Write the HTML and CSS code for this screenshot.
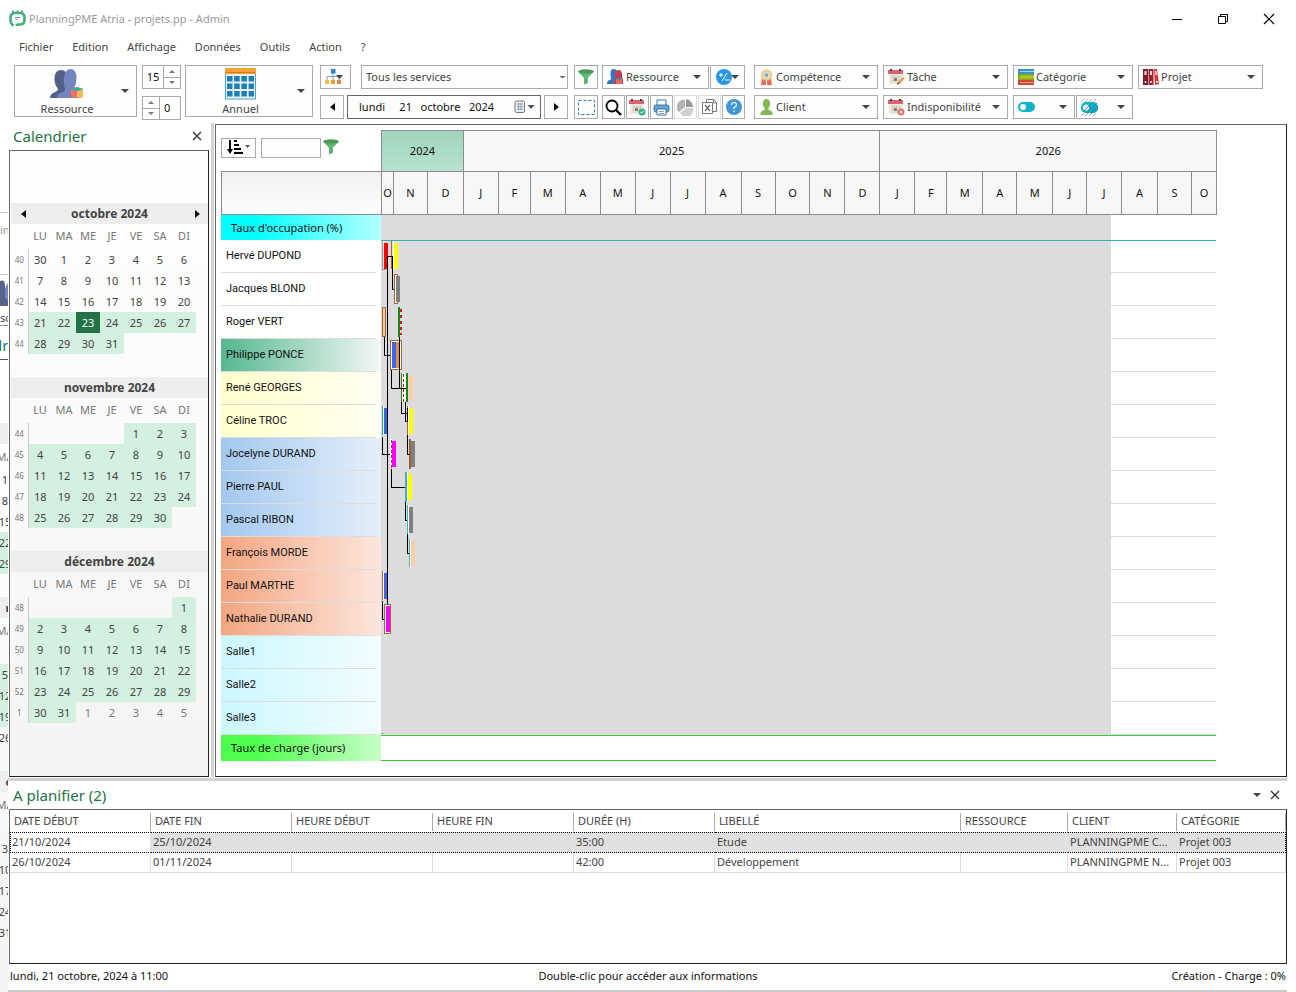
FILE: index.html
```html
<!DOCTYPE html>
<html lang="fr">
<head>
<meta charset="utf-8">
<title>PlanningPME Atria - projets.pp - Admin</title>
<link rel="stylesheet" href="styles.css">
</head>
<body>
<svg class="defs" aria-hidden="true">
  <symbol id="i-funnel" viewBox="0 0 16 16"><path d="M0 2.500 6 9v6.500l3.500-1.500V9L16 2.500z" fill="#5fb870"/><ellipse cx="8" cy="2.500" rx="8" ry="2.200" fill="#4b9a5c"/><path d="M8 9h1.500v5L8 14.600z" fill="#4ea660"/></symbol>
  <symbol id="i-cal" viewBox="0 0 17 17"><path d="M1 4h14v11H1z" fill="#efe8dc"/><path d="M0 1h15v4H0z" fill="#d9626c"/><path d="M3 0v2M12 0v2" stroke="#4b3b50" stroke-width="2"/><path d="M3 8h10M3 11h10M5 6v8M8 6v8M11 6v8" stroke="#cfc8bb"/><path d="M6 9h3v3H6z" fill="#8d7d6c"/></symbol>
</svg>
<div class="window">
  <div class="backdrop" aria-hidden="true">
    <div class="sliver rule">in</div>
    <div class="sliver face rule"><svg width="8" height="28" viewBox="0 0 8 28"><path d="M0 2Q5 0 5 7V18L8 21V27H0z" fill="#56648c"/><path d="M5 9L8 4V22L5 18z" fill="#7486c4"/></svg></div>
    <div class="sliver small">sc</div>
    <div class="sliver big rule">dr</div>
    <div class="bcell bhead first"></div><div class="bcell bday">MA</div>
    <div class="bcell">1</div><div class="bcell">8</div><div class="bcell">15</div><div class="bcell on">22</div><div class="bcell on">29</div>
    <div class="bcell bhead">n</div><div class="bcell bday">MA</div>
    <div class="bcell"></div><div class="bcell on">5</div><div class="bcell on">12</div><div class="bcell on">19</div><div class="bcell">26</div>
    <div class="bcell bhead last">o</div><div class="bcell bday">MA</div>
    <div class="bcell"></div><div class="bcell">3</div><div class="bcell">10</div><div class="bcell">17</div><div class="bcell">24</div><div class="bcell">31</div>
  </div>
  <div class="app">
    <header class="titlebar">
      <svg width="17" height="18" viewBox="0 0 17 18"><path d="M4.500 15.500Q1.500 14 1.500 10V7.500Q1.500 3 6 3h5q4.500 0 4.500 4.500V10q0 4.500-5 4.500-2.500 0-3.500 1" fill="none" stroke="#42b07c" stroke-width="2.600"/><path d="M4 .5v3M8.500 .5v3M13 .5v3" stroke="#42b07c" stroke-width="2"/><path d="M6 7.500h5" stroke="#3f9bd0"/><path d="M6 9.500h3" stroke="#e79b35"/></svg>
      <span class="title">PlanningPME Atria - projets.pp - Admin</span>
      <button class="wbtn" aria-label="Réduire"><svg width="12" height="12"><path d="M1 6.500h10" stroke="#000"/></svg></button>
      <button class="wbtn" aria-label="Restaurer"><svg width="12" height="12"><path d="M1.500 3.500h7v7h-7zM3.500 3V1.500h7v7H9" fill="none" stroke="#000"/></svg></button>
      <button class="wbtn" aria-label="Fermer"><svg width="12" height="12"><path d="M1 1l10 10M11 1L1 11" stroke="#000" stroke-width="1.200"/></svg></button>
    </header>
    <nav class="menu"><button>Fichier</button><button>Edition</button><button>Affichage</button><button>Données</button><button>Outils</button><button>Action</button><button>?</button></nav>

    <div class="toolbar">
      <button class="tb big-btn">
        <span class="big-face"><svg width="34" height="30" viewBox="0 0 34 30"><path d="M0 29q0-4 5-6 3-1 3-3Q4 15 4.500 8 5.500 1 11 1q4 0 5 3l3 22v3z" fill="#525f86"/><path d="M7 29q0-5 6-6 2-1 2-3-2-5-1-11Q15 0 20.500 0 26 0 26.500 8q.3 6-2.500 12 0 2 3 3 4 1 4 6z" fill="#7484c1"/><path d="M21 20l6-2 6 2v8l-6 1-6-1z" fill="#f3716a"/><path d="M27 22l6-2v8l-6 1z" fill="#f8b95d"/><path d="M21 20l6-2 6 2-6 2z" fill="#22b5a7"/></svg>Ressource</span><i class="caret"></i>
      </button>
      <div class="spins">
        <div class="spin"><input type="text" value="15" aria-label="Hauteur des lignes"><span><button aria-label="Plus"><i class="up"></i></button><button aria-label="Moins"><i class="down"></i></button></span></div>
        <div class="spin rev"><input type="text" value="0" aria-label="Espacement"><span><button aria-label="Plus"><i class="up"></i></button><button aria-label="Moins"><i class="down"></i></button></span></div>
      </div>
      <button class="tb big-btn annual">
        <span class="big-face"><svg width="31" height="32" viewBox="0 0 31 32"><path d="M.5 1.500h30V31H.5z" fill="#e7f4fb" stroke="#4ba3d5"/><path d="M0 0h31v6H0z" fill="#f4a13a"/><path d="M1 4.500h29" stroke="#d97c18"/><g stroke="#1f7fb5" stroke-width="5.500" stroke-dasharray="5.500 1.700"><path d="M2 10.800h27M2 18.300h27M2 25.800h27"/></g></svg>Annuel</span><i class="caret"></i>
      </button>
      <div class="stack nav-stack">
        <div class="line">
          <button class="tb w31" aria-label="Organisation"><svg width="22" height="16" viewBox="0 0 22 16"><path d="M8 3v8M2 11V7.500h12V11" fill="none" stroke="#8b99a6"/><path d="M6 0h4.500v4.500H6z" fill="#1d8be0"/><path d="M0 11h4v4H0z" fill="#f2be42"/><path d="M6 11h4v4H6z" fill="#ee9a2e"/><path d="M12 11h4v4h-4z" fill="#e8833a"/><path d="M11 6h7l-3.500 4z" fill="#444"/></svg></button>
          <select class="tb services" aria-label="Services"><option>Tous les services</option></select>
        </div>
        <div class="line tight">
          <button class="tb w24" aria-label="Précédent"><i class="tri-l"></i></button>
          <label class="tb date"><input type="text" aria-label="Date" value="lundi    &nbsp;21   octobre   2024"><svg width="21" height="14" viewBox="0 0 21 14"><rect x="1" y="1" width="9.500" height="11.500" rx="1.500" fill="#e9edf3" stroke="#777"/><path d="M3 4h6M3 6.500h6M3 9h6M4.500 3v7.500M7 3v7.500" stroke="#8d96a5" stroke-width=".8"/><path d="M13.500 5h7L17 9z" fill="#44587a"/></svg></label>
          <button class="tb w24" aria-label="Suivant"><i class="tri-r"></i></button>
        </div>
      </div>
      <div class="stack sel-stack">
        <button class="tb w24" aria-label="Filtrer"><svg width="16" height="16"><use href="#i-funnel"/></svg></button>
        <button class="tb w24" aria-label="Sélection"><svg width="17" height="15"><rect x=".5" y=".5" width="16" height="14" fill="none" stroke="#2a7bc0" stroke-dasharray="3 2"/></svg></button>
      </div>
      <div class="stack mid">
        <div class="line tight">
          <button class="tb drop grow"><svg width="17" height="16" viewBox="0 0 17 16"><path d="M0 15q0-4 3-4 1 0 1-2Q2 0 6.500 0q4 0 3.500 4l1 11z" fill="#3079bd"/><path d="M6 15q0-3 2-4V5q0-4 3.500-4T15 6q0 4 1 5v4z" fill="#bd4153"/><path d="M9 10h6v5H9z" fill="#e4695b"/><path d="M9 10l3-1 3 1-3 1z" fill="#22a59c"/></svg><span>Ressource</span><i class="caret"></i></button>
          <button class="tb w35" aria-label="Plus ou moins"><svg width="24" height="16" viewBox="0 0 24 16"><circle cx="8" cy="8" r="8" fill="#2796e5"/><path d="M5 4v4M3 6h4M11 4L6 12M9 11h5" stroke="#fff"/><path d="M15 6h8l-4 4z" fill="#444"/></svg></button>
        </div>
        <div class="line icons">
          <button class="tb" aria-label="Rechercher"><svg width="17" height="17" viewBox="0 0 17 17" fill="none" stroke="#000"><circle cx="7" cy="7" r="5.500" stroke-width="1.800"/><path d="M11 11l5 5" stroke-width="2.400"/></svg></button>
          <button class="tb" aria-label="Planifier"><svg width="17" height="17"><use href="#i-cal"/><circle cx="13" cy="13" r="3.500" fill="#3ab191"/><path d="M11.500 13l1 1 2-2" fill="none" stroke="#fff"/></svg></button>
          <button class="tb" aria-label="Imprimer"><svg width="17" height="17" viewBox="0 0 17 17" stroke="#3b79a8"><path d="M4 6V1h9v5" fill="#fff"/><rect x="1" y="6" width="15" height="7" rx="2" fill="#62a5d6"/><path d="M4 10h9v6H4z" fill="#fff"/><path d="M6 12.500h5M6 14.500h5" stroke="#8aa"/></svg></button>
          <button class="tb off" aria-label="Statistiques" disabled><svg width="17" height="17" viewBox="0 0 17 17"><path d="M8 1v7L2 13A7 7 0 0 1 8 1z" fill="#b3b3b3"/><path d="M9 0a8 8 0 0 1 7 8H9z" fill="#999"/><path d="M16 9a7 7 0 0 1-13 5l6-5z" fill="#d0d0d0"/></svg></button>
          <button class="tb off" aria-label="Excel" disabled><svg width="17" height="17" viewBox="0 0 17 17" fill="none" stroke="#777"><path d="M5.500 3.500v-3h7l3 3v9h-4"/><path d="M1.500 3.500h10v11h-10z" fill="#fff"/><path d="M4 6l5 6M9 6l-5 6" stroke="#666" stroke-width="1.300"/><path d="M12.500 1v3h3"/></svg></button>
          <button class="tb" aria-label="Aide"><svg width="16" height="16" viewBox="0 0 16 16"><circle cx="8" cy="8" r="8" fill="#3f97d3"/><path d="M5.500 6Q5.500 3.500 8 3.500T10.500 6Q10.500 7.500 8 8.500V10M8 11.500V13" fill="none" stroke="#fff" stroke-width="1.200"/></svg></button>
        </div>
      </div>
      <div class="stack filters">
        <div class="line fl">
          <button class="tb drop f1"><svg width="15" height="17" viewBox="0 0 15 17"><path d="M3 9h4v7H2zM8 9h4l1 7H8z" fill="#ea6b52"/><circle cx="7.500" cy="6" r="5.800" fill="#f5cf83"/><circle cx="7.500" cy="6" r="3.600" fill="#c9dce0"/><circle cx="7.500" cy="6" r="1.500" fill="#7896aa"/></svg><span>Compétence</span><i class="caret"></i></button>
          <button class="tb drop f2"><svg width="17" height="17" viewBox="0 0 17 17"><use href="#i-cal"/><path d="M9 16l1-3 5-5 1.500 1.500-5 5z" fill="#e39a3d"/><path d="M9 16l1-3 1.500 1.500z" fill="#70533c"/></svg><span>Tâche</span><i class="caret"></i></button>
          <button class="tb drop f3"><svg width="16" height="16" viewBox="0 0 16 16"><path d="M0 0h16v5H0z" fill="#3692c7"/><path d="M2 2.500h14" stroke="#a0d4ef"/><path d="M0 5h16v6H0z" fill="#86a51c"/><path d="M2 8h14" stroke="#a9c832" stroke-width="3"/><path d="M0 11h16v5H0z" fill="#cf4937"/><path d="M2 13.500h14" stroke="#f1998b"/></svg><span>Catégorie</span><i class="caret"></i></button>
          <button class="tb drop f4"><svg width="16" height="16" viewBox="0 0 16 16"><path d="M0 0h5v16H0z" fill="#7b1e25"/><path d="M5.500 0h5v16h-5z" fill="#a3202a"/><path d="M11 0h3l2 15-4 1z" fill="#d13a3a"/><path d="M1.500 2h2v4h-2zM7 2h2v4H7zM12 2h1.500l.5 4h-1.500z" fill="#f2e2e2"/><path d="M2.500 12v2M8 12v2M14 12v2" stroke="#fff" stroke-width="1.500"/></svg><span>Projet</span><i class="caret"></i></button>
        </div>
        <div class="line fl">
          <button class="tb drop f1"><svg width="15" height="17" viewBox="0 0 14 17"><path d="M1 16v-2q0-2 4-3V9Q3 7 3.500 3.500 4 0 7 0t3.500 3.500Q11 7 9 9v2q4 1 4 3v2z" fill="#82b852"/></svg><span>Client</span><i class="caret"></i></button>
          <button class="tb drop f2"><svg width="17" height="17"><use href="#i-cal"/><circle cx="13" cy="13" r="3.500" fill="#e0705f"/><path d="M11.500 11.500l3 3M14.500 11.500l-3 3" stroke="#fff"/></svg><span>Indisponibilité</span><i class="caret"></i></button>
          <div class="f3 pair">
            <button class="tb drop" aria-label="État"><svg width="17" height="12"><rect y="1" width="17" height="10" rx="5" fill="#0fb2cb"/><circle cx="5" cy="6" r="3" fill="#fff"/></svg><span></span><i class="caret"></i></button>
            <button class="tb drop" aria-label="État partiel"><svg width="17" height="17"><path d="M0 3l3-3M4 3l3-3M8 3l3-3M12 3l3-3M0 17l3-3M4 17l3-3M8 17l3-3M12 17l3-3" stroke="#999" stroke-width=".8"/><rect y="3" width="17" height="11" rx="5" fill="#0fb2cb"/><circle cx="5" cy="8.500" r="3" fill="#fff"/><path d="M6 14L16 4M10 14l7-7M2 13L12 3M13 14l4-4" stroke="#2d7380" stroke-width=".8"/></svg><span></span><i class="caret"></i></button>
          </div>
        </div>
      </div>
    </div>

    <div class="work">
      <aside class="side">
        <div class="pane-head"><h2>Calendrier</h2><button aria-label="Fermer le calendrier"><svg width="10" height="10"><path d="M1 1l8 8M9 1L1 9" stroke="#333" stroke-width="1.300"/></svg></button></div>
        <div class="cal-box">
          <table class="month">
            <caption><button aria-label="Mois précédent"><i class="tri-l"></i></button><span>octobre 2024</span><button aria-label="Mois suivant"><i class="tri-r"></i></button></caption>
            <colgroup><col class="c-week"><col span="7" class="c-day"><col></colgroup>
            <thead><tr><th></th><th>LU</th><th>MA</th><th>ME</th><th>JE</th><th>VE</th><th>SA</th><th>DI</th></tr></thead>
            <tbody>
            <tr><th>40</th><td>30</td><td>1</td><td>2</td><td>3</td><td>4</td><td>5</td><td>6</td></tr>
            <tr><th>41</th><td>7</td><td>8</td><td>9</td><td>10</td><td>11</td><td>12</td><td>13</td></tr>
            <tr><th>42</th><td>14</td><td>15</td><td>16</td><td>17</td><td>18</td><td>19</td><td>20</td></tr>
            <tr class="on"><th>43</th><td>21</td><td>22</td><td class="today">23</td><td>24</td><td>25</td><td>26</td><td>27</td></tr>
            <tr class="on"><th>44</th><td>28</td><td>29</td><td>30</td><td>31</td></tr>
            </tbody>
          </table>
          <table class="month">
            <caption><span>novembre 2024</span></caption>
            <colgroup><col class="c-week"><col span="7" class="c-day"><col></colgroup>
            <thead><tr><th></th><th>LU</th><th>MA</th><th>ME</th><th>JE</th><th>VE</th><th>SA</th><th>DI</th></tr></thead>
            <tbody>
            <tr class="on"><th>44</th><td class="out" colspan="4"></td><td>1</td><td>2</td><td>3</td></tr>
            <tr class="on"><th>45</th><td>4</td><td>5</td><td>6</td><td>7</td><td>8</td><td>9</td><td>10</td></tr>
            <tr class="on"><th>46</th><td>11</td><td>12</td><td>13</td><td>14</td><td>15</td><td>16</td><td>17</td></tr>
            <tr class="on"><th>47</th><td>18</td><td>19</td><td>20</td><td>21</td><td>22</td><td>23</td><td>24</td></tr>
            <tr class="on"><th>48</th><td>25</td><td>26</td><td>27</td><td>28</td><td>29</td><td>30</td></tr>
            </tbody>
          </table>
          <table class="month">
            <caption><span>décembre 2024</span></caption>
            <colgroup><col class="c-week"><col span="7" class="c-day"><col></colgroup>
            <thead><tr><th></th><th>LU</th><th>MA</th><th>ME</th><th>JE</th><th>VE</th><th>SA</th><th>DI</th></tr></thead>
            <tbody>
            <tr class="on"><th>48</th><td class="out" colspan="6"></td><td>1</td></tr>
            <tr class="on"><th>49</th><td>2</td><td>3</td><td>4</td><td>5</td><td>6</td><td>7</td><td>8</td></tr>
            <tr class="on"><th>50</th><td>9</td><td>10</td><td>11</td><td>12</td><td>13</td><td>14</td><td>15</td></tr>
            <tr class="on"><th>51</th><td>16</td><td>17</td><td>18</td><td>19</td><td>20</td><td>21</td><td>22</td></tr>
            <tr class="on"><th>52</th><td>23</td><td>24</td><td>25</td><td>26</td><td>27</td><td>28</td><td>29</td></tr>
            <tr class="on"><th>1</th><td>30</td><td>31</td><td class="out">1</td><td class="out">2</td><td class="out">3</td><td class="out">4</td><td class="out">5</td></tr>
            </tbody>
          </table>
        </div>
      </aside>
      <main class="plan">
        <div class="gantt">
          <div class="corner">
            <div class="tools">
              <button class="tb sort" aria-label="Trier"><svg width="24" height="14" viewBox="0 0 24 14"><path d="M3 0v11" stroke="#000" stroke-width="2"/><path d="M0 9h6l-3 5z"/><path d="M7 1h3M7 5h5M7 9h7M7 13h9" stroke="#000" stroke-width="2"/><path d="M18 5h5l-2.500 3z" fill="#555"/></svg></button>
              <input type="text" class="tb find" aria-label="Rechercher une ressource">
              <svg width="16" height="16"><use href="#i-funnel"/></svg>
            </div>
            <div class="blank"></div>
          </div>
          <div class="scale">
            <div class="years"><span class="now">2024</span><span>2025</span><span>2026</span></div>
            <div class="months"><span>O</span><span>N</span><span>D</span><span>J</span><span>F</span><span>M</span><span>A</span><span>M</span><span>J</span><span>J</span><span>A</span><span>S</span><span>O</span><span>N</span><span>D</span><span>J</span><span>F</span><span>M</span><span>A</span><span>M</span><span>J</span><span>J</span><span>A</span><span>S</span><span>O</span></div>
          </div>
          <div class="rate occ">Taux d'occupation (%)</div><div class="track"></div>
          <ul class="names">
            <li>Hervé DUPOND</li><li>Jacques BLOND</li><li>Roger VERT</li>
            <li class="green">Philippe PONCE</li>
            <li class="yellow">René GEORGES</li><li class="yellow">Céline TROC</li>
            <li class="blue">Jocelyne DURAND</li><li class="blue">Pierre PAUL</li><li class="blue">Pascal RIBON</li>
            <li class="orange">François MORDE</li><li class="orange">Paul MARTHE</li><li class="orange">Nathalie DURAND</li>
            <li class="cyan">Salle1</li><li class="cyan">Salle2</li><li class="cyan">Salle3</li>
          </ul>
          <div class="track rows">
            <svg width="60" height="495" viewBox="0 0 60 495" shape-rendering="crispEdges">
              <path d="M1.500 1.500v28h3" fill="none" stroke="#999"/><path d="M2 2h2v27H2z" fill="#eedede"/><path d="M3 3h4v26H3z" fill="#f00"/>
              <path d="M10.500 1v28" stroke="#a5662f"/><path d="M12 1h1v29h-1z" fill="#fff"/><path d="M13 3h4v26h-4z" fill="#ff0"/>
              <path d="M13.500 34.500h3v29h-3z" fill="#fff" stroke="#a5662f"/><path d="M15 36h4v26h-4z" fill="#808080"/>
              <path d="M1.500 67.500h3v29h-3z" fill="#ffcb99" stroke="#a5662f"/>
              <path d="M17 67h2v30h-2z" fill="#118a11"/><path d="M20 69v26" stroke="#e0141e" stroke-width="2" stroke-dasharray="3 3"/>
              <path d="M9.500 100.500h11v29h-11z" fill="#fff" stroke="#a5662f"/><path d="M11 102h4v26h-4z" fill="#3f66f0"/><path d="M15 102h4v26h-4z" fill="#dd8f47"/>
              <path d="M21 133h5v29h-5z" fill="#fff"/><path d="M20 133h1v29h-1zM25 133h2v29h-2z" fill="#118a11"/><path d="M22.500 134v28" stroke="#c4181e" stroke-dasharray="3 2"/><path d="M28 135h4v26h-4z" fill="#ffcda4"/>
              <path d="M1 166h1v29H1z" fill="#22a8b0"/><path d="M2 166h1v29H2z" fill="#fff"/><path d="M3 168h4v26H3z" fill="#3366dd"/>
              <path d="M26 166h1v29h-1z" fill="#a5662f"/><path d="M27 166h1v29h-1z" fill="#fff"/><path d="M28 168h4v26h-4z" fill="#ff0"/>
              <path d="M10 199v30" stroke="#fff" stroke-width="2"/><path d="M10.500 200v29" stroke="#c4283e" stroke-dasharray="3 2"/><path d="M11 201h4v26h-4z" fill="#f0f"/>
              <path d="M28 199h2v30h-2z" fill="#9b6030"/><path d="M30 201h4v26h-4z" fill="#808080"/>
              <path d="M24 232h2v30h-2z" fill="#3cb5b5"/><path d="M26 232h1v30h-1z" fill="#fff"/><path d="M27 234h4v26h-4z" fill="#ff0"/>
              <path d="M26 265h1v29h-1z" fill="#3cb5b5"/><path d="M27 265h1v29h-1z" fill="#fff"/><path d="M28 267h4v26h-4z" fill="#808080"/>
              <path d="M28 298h1v29h-1z" fill="#3cb5b5"/><path d="M29 298h1v29h-1z" fill="#fff"/><path d="M30 300h4v26h-4z" fill="#ffcda4"/>
              <path d="M1 331h1v29H1z" fill="#a5662f"/><path d="M2 331h1v29H2z" fill="#fff"/><path d="M3 333h4v26H3z" fill="#3f66dd"/>
              <path d="M3.500 364.500h6v29h-6z" fill="#fff" stroke="#a5662f"/><path d="M5 366h4v26H5z" fill="#f0f"/>
              <path d="M1 493h1v1H1z" fill="#118a11"/>
              <g fill="none" stroke="#000"><path d="M11 16.500H6.500V364M11.500 16v33.500H13M3.500 97v18.500H9M10.500 130v18.500H25M18.500 97v51M20.500 162v11.500h6M24.500 162v19.500h2V168M1.500 197v17.500H9M26.500 195v19.500H28M10.500 229v18.500H24M24.500 262v18.500H26M26.500 294v19.500H28M1.500 361v18.500H3"/></g>
            </svg>
          </div>
          <div class="rate load">Taux de charge (jours)</div><div class="load-track"></div>
        </div>
      </main>
    </div>

    <section class="todo">
      <div class="pane-head"><h2>A planifier (2)</h2><button aria-label="Options"><i class="caret"></i></button><button aria-label="Fermer la liste"><svg width="10" height="10"><path d="M1 1l8 8M9 1L1 9" stroke="#333" stroke-width="1.300"/></svg></button></div>
      <div class="list">
        <table>
          <colgroup><col span="5" class="c-date"><col><col class="c-res"><col span="2" class="c-cat"></colgroup>
          <thead><tr><th>DATE DÉBUT</th><th>DATE FIN</th><th>HEURE DÉBUT</th><th>HEURE FIN</th><th>DURÉE (H)</th><th>LIBELLÉ</th><th>RESSOURCE</th><th>CLIENT</th><th>CATÉGORIE</th></tr></thead>
          <tbody>
          <tr class="sel"><td>21/10/2024</td><td>25/10/2024</td><td></td><td></td><td>35:00</td><td>Etude</td><td></td><td>PLANNINGPME C...</td><td>Projet 003</td></tr>
          <tr><td>26/10/2024</td><td>01/11/2024</td><td></td><td></td><td>42:00</td><td>Développement</td><td></td><td>PLANNINGPME N...</td><td>Projet 003</td></tr>
          </tbody>
        </table>
      </div>
    </section>
    <footer class="status"><span>lundi, 21 octobre, 2024 à 11:00</span><span>Double-clic pour accéder aux informations</span><span>Création - Charge : 0%</span></footer>
  </div>
</div>
</body>
</html>
```
FILE: styles.css
```css
* { box-sizing: border-box; }
body { margin: 0; background: #fff; color: #444; font: 11px/16px "Noto Sans", "Open Sans", sans-serif; }
button, input, select { font: inherit; color: inherit; margin: 0; padding: 0; border: 0; background: none; }
svg { display: block; flex: none; }
h2 { margin: 0; font-weight: 400; font-size: 15px; line-height: 20px; color: #217346; flex: 1; }
.defs { position: absolute; width: 0; height: 0; }
.window { display: flex; min-height: 100vh; }

/* Edge of the window lying behind */
.backdrop { width: 8px; flex: none; overflow: hidden; padding-top: 212px; background: linear-gradient(#fff 400px, #f4f4f4); }
.sliver { width: 24px; height: 34px; line-height: 34px; color: #999; }
.sliver.rule { border-top: 1px solid #ccc; margin-bottom: 28px; }
.sliver.face { margin: 0; height: 36px; padding-top: 4px; }
.sliver.small { height: 16px; line-height: 16px; color: #444; border-bottom: 1px solid #999; }
.sliver.big { margin: 0; border: 0; border-bottom: 1px solid #555; font-size: 15px; color: #217373; line-height: 38px; text-indent: -7px; }
.bcell { width: 24px; height: 21px; margin-left: -7px; text-align: center; line-height: 21px; }
.bcell.on { background: #d3f0e0; }
.bhead { background: #eee; font-weight: 700; margin-top: 23px; padding-left: 8px; }
.bhead.first { margin-top: 63px; }
.bday { height: 25px; line-height: 25px; color: #777; }

.app { flex: 1; min-width: 0; display: flex; flex-direction: column; padding-right: 9px; }
.titlebar { display: flex; align-items: center; height: 36px; padding: 2px 0 0 1px; margin-right: -5px; }
.title { flex: 1; margin-left: 3px; color: #999; }
.wbtn { width: 46px; height: 30px; display: grid; place-items: center; }
.menu { display: flex; gap: 19px; padding: 3px 11px 0; height: 29px; }
.menu button { height: 16px; }

.toolbar { display: flex; align-items: flex-start; padding-left: 6px; height: 58px; }
.tb { border: 1px solid #aaa; background: #fdfdfd; height: 24px; display: flex; align-items: center; justify-content: center; flex: none; }
.caret { border: 4px solid transparent; border-top-color: #444; border-bottom: 0; flex: none; }
.tri-l, .tri-r { border: 4px solid transparent; border-right: 5px solid #111; border-left: 0; }
.tri-r { border-right: 0; border-left: 5px solid #111; }
.up, .down { border: 3px solid transparent; border-top: 0; border-bottom-color: #777; }
.down { border-top: 3px solid #777; border-bottom: 0; }
.big-btn { width: 123px; height: 52px; padding-right: 7px; }
.big-btn.annual { width: 128px; }
.big-face { flex: 1; display: flex; flex-direction: column; align-items: center; justify-content: flex-end; height: 50px; line-height: 14px; gap: 3px; padding-right: 2px; }
.annual .big-face { gap: 2px; }
.spins { margin: 0 4px 0 5px; display: grid; gap: 7px; }
.spin { display: flex; width: 39px; height: 24px; border: 1px solid #aaa; color: #111; }
.spin input { width: 20px; flex: 1; min-width: 0; text-align: center; }
.spin span { width: 17px; display: flex; flex-direction: column; border-left: 1px solid #aaa; }
.spin.rev { flex-direction: row-reverse; }
.spin.rev input { text-align: left; padding-left: 4px; }
.spin.rev span { border-left: 0; border-right: 1px solid #aaa; }
.spin button { flex: 1; display: grid; place-items: center; }
.spin button + button { border-top: 1px solid #aaa; }
.stack { display: flex; flex-direction: column; gap: 6px; margin-right: 8px; flex: none; }
.nav-stack { margin: 0 6px 0 7px; }
.sel-stack { margin-right: 4px; }
.line { display: flex; gap: 10px; }
.line.tight { gap: 3px; }
.mid .tight { gap: 1px; }
.w31 { width: 31px; } .w24 { width: 24px; } .w35 { width: 35px; }
.services { width: 207px; appearance: none; padding: 0 4px; background: linear-gradient(#777, #777) 198px 10px / 5px 1px no-repeat, linear-gradient(#777, #777) 199px 11px / 3px 1px no-repeat, #fdfdfd; }
.date { width: 194px; padding: 0 5px 0 11px; border-color: #666; color: #111; }
.date input { flex: 1; min-width: 0; white-space: pre; }
.grow { flex: 1; }
.icons { gap: 1px; }
.icons .tb { width: 23px; }
.icons .off { border-color: #ddd; }
.drop { padding: 0 7px 0 4px; gap: 2px; }
.drop span { flex: 1; text-align: left; }
.filters { margin: 0; flex: 1 1 0; min-width: 0; }
.fl { gap: 5px; }
.f1, .f2, .f4 { width: 125px; } .f3 { width: 120px; }
.f1 { margin-left: 1px; width: 124px; }
.pair { display: flex; gap: 1px; }
.pair .drop:first-child { width: 62px; }
.pair .drop:last-child { width: 57px; }

.work { display: flex; border-bottom: 3px solid #d2d2d2; padding-bottom: 1px; }
.side { width: 206px; flex: none; display: flex; flex-direction: column; border-right: 3px solid #d2d2d2; padding: 0 2px 0 1px; }
.pane-head { display: flex; align-items: center; height: 27px; padding: 0 6px 2px 4px; }
.pane-head button { width: 12px; height: 16px; display: grid; place-items: center; }
.cal-box { flex: 1; border: 1px solid #222; border-top-color: #666; border-left-color: #666; padding: 52px 0 30px 1px; background: linear-gradient(#fff, #f4f4f4); }
.month { border-collapse: collapse; table-layout: fixed; width: 100%; margin-bottom: 23px; }
.month caption { background: #eee; height: 21px; line-height: 21px; font-size: 12px; font-weight: 700; position: relative; }
.month caption button { position: absolute; top: 0; left: 8px; width: 8px; height: 21px; display: grid; place-items: center; }
.month caption button:last-child { left: auto; right: 7px; }
.month .c-week { width: 17px; }
.month .c-day { width: 24px; }
.month th, .month td { padding: 0; height: 21px; text-align: center; font-weight: 400; }
.month th:first-child { font-size: 8px; color: #777; }
.month tbody th { border-right: 1px solid #ccc; }
.month thead th { height: 25px; color: #777; line-height: 14px; padding-bottom: 1px; }
.month .on td { background: #d3f0e0; }
.month .on .out { background: none; color: #777; }
.month .on .today { background: #217346; color: #fff; }

.plan { flex: 1; min-width: 0; margin-left: 1px; margin-top: 1px; border: 1px solid #222; border-top-color: #666; border-left-color: #666; padding: 5px 70px 15px 5px; background: #fff; color: #111; }
.gantt { display: grid; grid-template-columns: 160px minmax(0, 1fr); }
.corner { display: flex; flex-direction: column; }
.tools { display: flex; gap: 5px; height: 41px; padding: 8px 0; }
.tools svg { align-self: flex-start; margin-top: 1px; }
.sort { width: 35px; height: 20px; }
.tools .find { width: 60px; height: 20px; margin-right: -3px; }
.blank { height: 44px; border: 1px solid #8b8b90; border-right: 0; background: linear-gradient(#f1f1f1, #fdfdfd); }
.years, .months { display: grid; border-left: 1px solid #8b8b90; margin-right: -1px; }
.years { grid-template-columns: 82fr 417fr 337fr; height: 41px; }
.months { grid-template-columns: 12fr 34fr 36fr 35fr 32fr 35fr 35fr 35fr 35fr 35fr 36fr 34fr 35fr 35fr 35fr 35fr 32fr 36fr 34fr 36fr 34fr 35fr 36fr 34fr 25fr; height: 44px; border-bottom: 1px solid #8b8b90; }
.scale span { min-width: 0; display: grid; place-items: center; background: #f7f7f7; border-top: 1px solid #8b8b90; border-right: 1px solid #8b8b90; }
.scale .now { background: linear-gradient(#9ed5bb, #b8e2cf); }
.rate { height: 25px; line-height: 25px; padding-left: 10px; }
.occ { background: linear-gradient(90deg, #0ff 20%, #b3ffff); }
.load { height: 26px; background: linear-gradient(90deg, #4cff4c 20%, #c8ffc8); }
.track { background: linear-gradient(#dcdcde, #dcdcde) no-repeat; background-size: calc(100% * 731 / 836) 100%; }
.names { list-style: none; margin: 0; padding: 0; font-family: Roboto, "Noto Sans", sans-serif; }
.names li { height: 33px; line-height: 32px; padding-left: 5px; background-image: linear-gradient(#ddd, #ddd), linear-gradient(90deg, var(--a, #fff), var(--b, #fff)); background-size: 155px 1px, 100% 100%; background-position: 0 100%, 0 0; background-repeat: no-repeat; }
.green { --a: #55b78f; --b: #f3f8f6; }
.yellow { --a: #ffffcc; --b: #fffff2; }
.blue { --a: #a3c8f0; --b: #e5effa; }
.orange { --a: #f4a681; --b: #fce6dd; }
.cyan { --a: #ccf7ff; --b: #f2fdff; }
.rows { border-top: 1px solid #36b0b4; background-image: linear-gradient(#dcdcde, #dcdcde), repeating-linear-gradient(#fff 0 31px, #dcdcde 31px 32px, #fff 32px 33px); background-size: calc(100% * 731 / 836) 100%, 100% 100%; }
.rows svg { margin-top: -1px; }
.load-track { border-top: 1px solid #3cc83c; border-bottom: 1px solid #3cc83c; }

.todo { flex: 1; display: flex; flex-direction: column; padding-left: 1px; }
.todo .pane-head { height: 28px; padding-top: 2px; gap: 6px; }
.list { flex: 1; border: 1px solid #222; border-top-color: #666; border-left-color: #666; }
.list table { width: 100%; table-layout: fixed; border-collapse: separate; border-spacing: 0; }
.c-date { width: 141px; } .c-res { width: 107px; } .c-cat { width: 109px; }
.list th { height: 22px; padding: 0 4px 1px; text-align: left; font-weight: 400; background: linear-gradient(#aaa, #aaa) 100% 3px / 1px 18px no-repeat; }
.list td { height: 20px; padding: 0 0 1px 2px; line-height: 18px; border-right: 1px solid #ddd; border-bottom: 1px solid #ddd; white-space: nowrap; overflow: hidden; }
.list .sel td { height: 21px; background: #e0e0e0; border-top: 1px dotted #000; border-bottom: 1px dotted #000; border-right-color: #e0e0e0; }
.list .sel td:first-child { background: #fff; border-left: 1px dotted #000; padding-left: 1px; }
.list .sel td:last-child { border-right: 1px dotted #000; }
.status { display: grid; grid-template-columns: 1fr auto 1fr; align-items: center; height: 28px; padding: 0 1px 3px 2px; border-bottom: 2px solid #ccc; color: #111; }
.status span:last-child { text-align: right; }
```
